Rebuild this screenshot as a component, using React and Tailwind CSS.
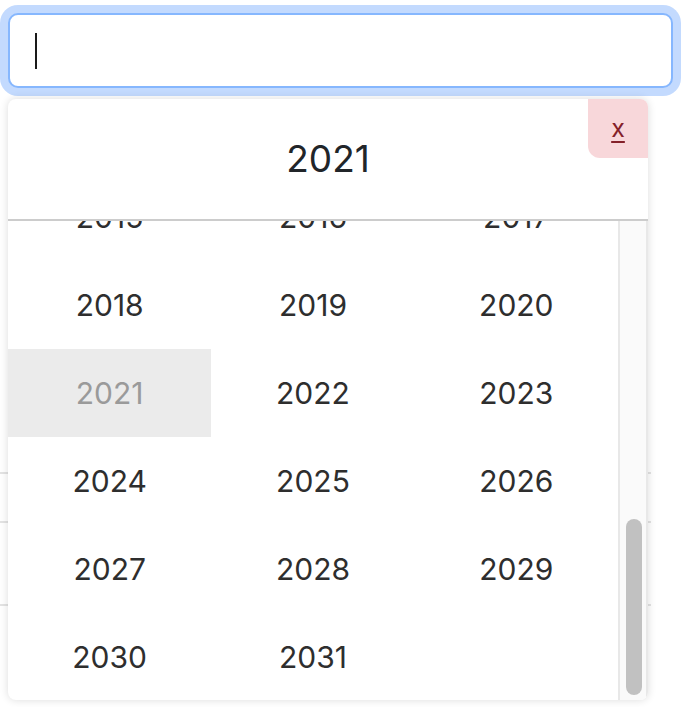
const years = [];
for (let y = 2015; y <= 2031; y++) years.push(y);

const selected = 2021;

function YearCell({ year }) {
  const active = year === selected;
  return (
    <div
      className={
        'h-[88px] flex items-center justify-center text-[30px] ' +
        (active ? 'bg-[#ebebeb] text-[#9a9a9a]' : 'text-[#2e2e2e]')
      }
    >
      {year}
    </div>
  );
}

export default function App() {
  return (
    <div
      className="relative h-[707px] w-[681px] overflow-hidden bg-white"
      style={{ fontFamily: 'Inter, "Noto Sans", sans-serif' }}
    >
      {/* input with focus ring */}
      <div className="pt-[13px] px-[8px]">
        <div className="h-[75px] rounded-[10px] border-2 border-[#86b7fe] bg-white shadow-[0_0_0_8px_#c3dafe] flex items-center pl-[25px]">
          <span className="block h-[36px] w-[2px] bg-[#1a1a1a]" />
        </div>
      </div>

      {/* page content behind the dropdown */}
      <div className="w-[651px]">
        <div className="h-[386px] border-b-2 border-[#e3e3e3]" />
        <div className="h-[49px] border-b-2 border-[#e3e3e3]" />
        <div className="h-[83px] border-b-2 border-[#e3e3e3]" />
      </div>

      {/* year picker dropdown */}
      <div className="absolute left-[8px] top-[99px] w-[640px] h-[601px] rounded-[8px] bg-white shadow-[0_0_9px_rgba(0,0,0,0.14)] overflow-hidden flex flex-col">
        <div className="relative h-[122px] shrink-0 border-b-2 border-[#cccccc] flex items-center justify-center text-[37px] text-[#212529]">
          2021
          <button
            type="button"
            className="absolute top-0 right-0 w-[60px] h-[59px] rounded-bl-[12px] bg-[#f8d7da] text-[#842029] text-[25px] underline underline-offset-4 flex items-center justify-center"
          >
            x
          </button>
        </div>
        <div className="flex flex-1 min-h-0">
          <div className="flex-1 overflow-hidden">
            <div className="grid grid-cols-3 -mt-[48px]">
              {years.map((y) => (
                <YearCell key={y} year={y} />
              ))}
            </div>
          </div>
          <div className="w-[30px] shrink-0 bg-[#fafafa] border-l-2 border-r-2 border-[#e8e8e8] flex flex-col justify-end pb-[5px]">
            <div className="ml-[6px] w-[16px] h-[176px] rounded-full bg-[#c1c1c1]" />
          </div>
        </div>
      </div>
    </div>
  );
}
